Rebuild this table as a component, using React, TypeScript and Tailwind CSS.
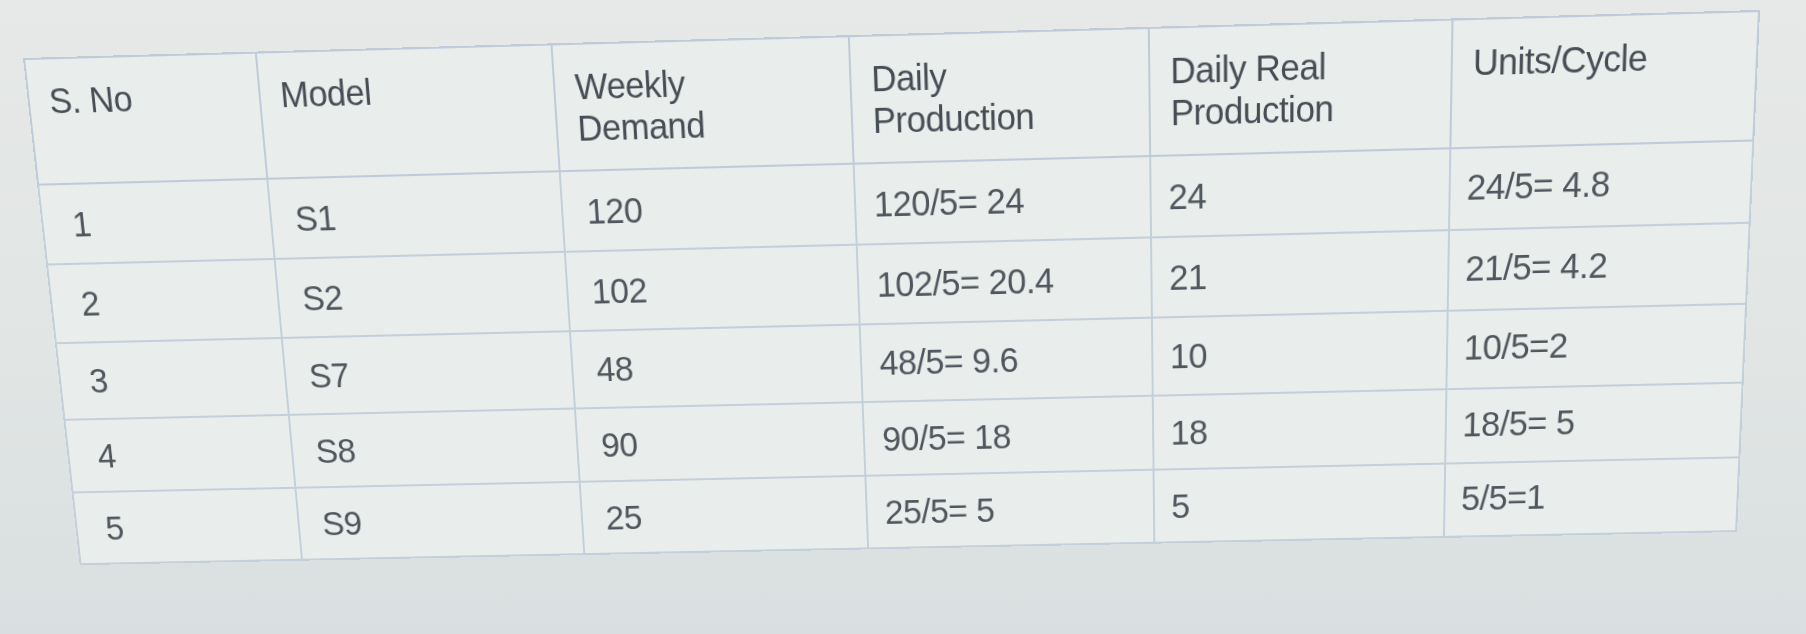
const headers = [
  ["S. No"],
  ["Model"],
  ["Weekly", "Demand"],
  ["Daily", "Production"],
  ["Daily Real", "Production"],
  ["Units/Cycle"],
];

const rows = [
  ["1", "S1", "120", "120/5= 24", "24", "24/5= 4.8"],
  ["2", "S2", "102", "102/5= 20.4", "21", "21/5= 4.2"],
  ["3", "S7", "48", "48/5= 9.6", "10", "10/5=2"],
  ["4", "S8", "90", "90/5= 18", "18", "18/5= 5"],
  ["5", "S9", "25", "25/5= 5", "5", "5/5=1"],
];

const widths = ["w-[237px]", "w-[300px]", "w-[299px]", "w-[299px]", "w-[300px]", "w-[300px]"];

// data cells sit a little further in on the left columns
const dataPad = ["pl-[30px]", "pl-6", "pl-6", "pl-[18px]", "pl-[17px]", "pl-4 pb-1"];

const rowHeights = ["h-[79px]", "h-[79px]", "h-[78px]", "h-[75px]", "h-[75px]"];

export default function App() {
  return (
    <div className="w-full h-[634px] overflow-hidden pl-[23px] pt-[58px] bg-[linear-gradient(180deg,#e6e9e8_0%,#e1e5e4_55%,#d9dfe0_100%)] font-['Liberation_Sans',Arial,sans-serif]">
      <table className="table-fixed border-collapse w-[1735px] origin-top-left bg-[#e9edeb] text-[35px] leading-[40px] [transform:matrix3d(0.974398,-0.026957,0,-0.000014757,0.11667,1.041842,0,0.00009371,0,0,1,0,0,0,0,1)]">
        <colgroup>
          {widths.map((w, i) => (
            <col key={i} className={w} />
          ))}
        </colgroup>
        <thead>
          <tr className="h-[122px]">
            {headers.map((lines, i) => (
              <th
                key={i}
                className="border-2 border-[#bfcbd8] align-top text-left font-normal pt-5 pl-5 text-[#474d55] tracking-[-0.5px]"
              >
                {lines.map((l, j) => (
                  <div key={j}>{l}</div>
                ))}
              </th>
            ))}
          </tr>
        </thead>
        <tbody>
          {rows.map((r, i) => (
            <tr key={i} className={rowHeights[i]}>
              {r.map((c, j) => (
                <td
                  key={j}
                  className={`border-2 border-[#c3cfda] align-middle text-[#50565e] tracking-[-0.5px] ${dataPad[j]}`}
                >
                  {c}
                </td>
              ))}
            </tr>
          ))}
        </tbody>
      </table>
    </div>
  );
}
